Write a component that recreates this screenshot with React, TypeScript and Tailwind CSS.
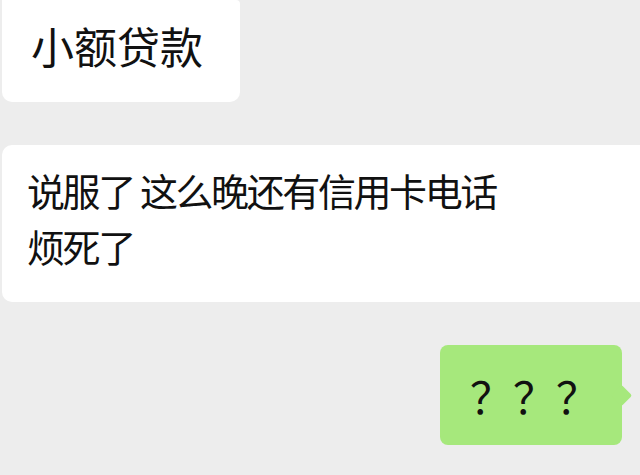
const cjk = "font-['Noto_Sans_CJK_SC','Noto_Sans',sans-serif]";

function LeftBubble({
  className,
  children,
}: {
  className: string;
  children: React.ReactNode;
}) {
  return <div className={`bg-white text-[#111] ${cjk} ${className}`}>{children}</div>;
}

/** Outgoing message: green bubble with a small tail on the right. */
function RightBubble({ children }: { children: React.ReactNode }) {
  return (
    <div className="relative mr-[18px] mt-[43px] flex h-[100px] w-[182px] items-center self-end rounded-[8px] bg-[#a6e87c] pl-[30px]">
      <span className={`text-[43px] leading-none text-[#111] ${cjk}`}>{children}</span>
      {/* tail */}
      <div className="absolute right-[-7px] top-[43px] size-[15px] rotate-45 rounded-[2px] bg-[#a6e87c]" />
    </div>
  );
}

export default function App() {
  return (
    <div className="flex h-[475px] w-[640px] flex-col overflow-hidden bg-[#ededed]">
      <LeftBubble className="ml-[2px] flex h-[102px] w-[238px] items-center rounded-b-[10px] rounded-tr-[4px] pb-[12px] pl-[29px] text-[43px] leading-none">
        小额贷款
      </LeftBubble>

      <LeftBubble className="ml-[2px] mt-[43px] h-[157px] w-[638px] rounded-l-[10px] pl-[25px] pt-[17px] text-[38px] leading-[56px] tracking-[-2.4px]">
        <p>说服了 这么晚还有信用卡电话</p>
        <p>烦死了</p>
      </LeftBubble>

      <RightBubble>？？？</RightBubble>
    </div>
  );
}
